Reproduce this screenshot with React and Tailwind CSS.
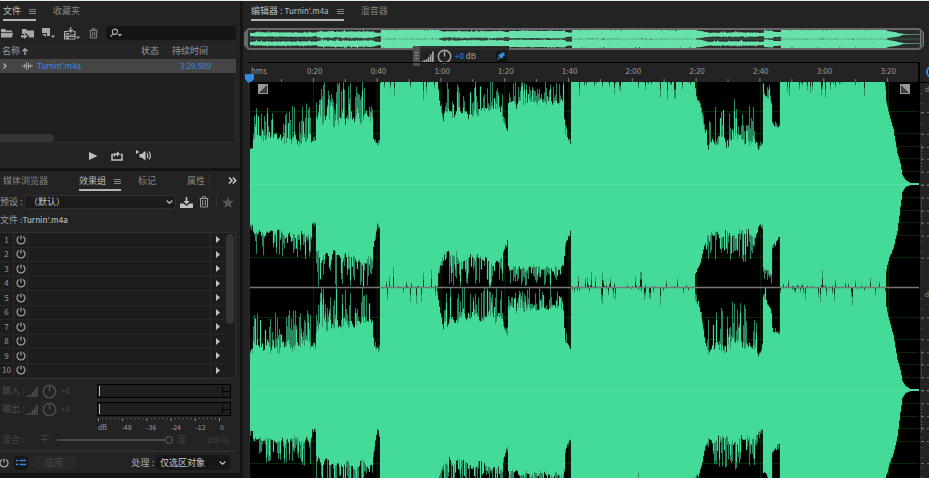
import React, { useState } from 'react';

// Envelope of one channel: [x, upper body, upper peak, lower body, lower peak]
const ENVELOPE = [
  [0, 34, 40, 40, 45], [3, 34, 42, 40, 48],
  [4, 34, 78, 44, 72], [62, 36, 86, 44, 76],
  [63, 42, 48, 38, 44], [67, 40, 48, 38, 42],
  [67, 54, 102, 64, 103], [123, 60, 102, 68, 103],
  [124, 42, 60, 60, 70], [128, 36, 44, 38, 42],
  [131, 40, 50, 42, 50], [131, 103, 103, 103, 103],
  [188, 103, 103, 103, 103], [189, 85, 100, 85, 100],
  [194, 55, 72, 70, 85], [196, 60, 103, 64, 103],
  [253, 66, 103, 72, 103], [254, 62, 75, 65, 75],
  [259, 46, 60, 52, 60], [259, 74, 103, 78, 103],
  [314, 78, 103, 80, 103], [316, 45, 60, 58, 65],
  [322, 38, 45, 42, 50], [322, 103, 103, 103, 103],
  [445, 103, 103, 103, 103], [446, 88, 98, 85, 98],
  [451, 76, 85, 78, 82], [456, 45, 58, 55, 65],
  [459, 32, 72, 42, 76], [485, 36, 94, 42, 80], [507, 34, 76, 42, 76],
  [509, 32, 40, 40, 50], [514, 40, 48, 38, 44],
  [514, 90, 103, 80, 100], [522, 75, 100, 88, 100],
  [523, 58, 66, 60, 66], [531, 54, 58, 50, 58],
  [531, 103, 103, 103, 103], [636, 103, 103, 103, 103],
  [637, 80, 84, 84, 88], [640, 68, 70, 72, 76],
  [644, 54, 56, 63, 65], [648, 30, 32, 46, 48],
  [651, 20, 21, 22, 24], [653, 9, 9, 8, 8],
  [656, 4, 4, 3, 3], [661, 1, 1, 1, 1], [670, 1, 1, 1, 1],
];

const TIMES = ['0:20', '0:40', '1:00', '1:20', '1:40', '2:00', '2:20', '2:40', '3:00', '3:20'];
const DB_LINES = [13, 26, 38, 51, 73];
const WIDTH = 670;

const noise = (n) => {
  const v = Math.sin(n * 127.1 + 311.7) * 43758.5453;
  return v - Math.floor(v);
};

const smooth = (x) => {
  const i = Math.floor(x);
  return noise(i) + (noise(i + 1) - noise(i)) * (x - i);
};

const envelopeAt = (x) => {
  let i = 0;
  while (i < ENVELOPE.length - 2 && ENVELOPE[i + 1][0] <= x) i++;
  const a = ENVELOPE[i];
  const b = ENVELOPE[i + 1];
  const t = b[0] === a[0] ? 0 : Math.min(1, (x - a[0]) / (b[0] - a[0]));
  return a.map((v, k) => v + (b[k] - v) * t);
};

const buildChannel = (center, seed) => {
  let body = '';
  let peaks = '';
  for (let x = 0; x < WIDTH; x++) {
    const [, ub, up, lb, lp] = envelopeAt(x);
    const full = ub >= 103;
    const side = (base, peak, s) => {
      const n = noise(x + s);
      const m = noise(x * 3 + s + 50);
      if (full) {
        const dip = n > 0.72 ? 1 + m * m * m * 20 : 0;
        return [103 - dip, 103 - dip * 0.5];
      }
      // slow swell of the loudness with single samples that stick out of it
      const swell = smooth(x / 3 + s);
      const spike = n > 0.84 ? 0.25 + m * 0.5 : n * 0.2;
      const solid = base + (peak - base) * (swell * 0.25 + spike);
      const tip = noise(Math.floor(x / 2) + s + 400) > 0.35 ? solid + (peak - solid) * m : solid;
      return [solid, tip];
    };
    const [u, ut] = side(ub, up, seed);
    const [l, lt] = side(lb, lp, seed + 900);
    body += `M${x + 0.5} ${(center - u).toFixed(1)}V${(center + l).toFixed(1)}`;
    peaks += `M${x + 0.5} ${(center - ut).toFixed(1)}V${(center + lt).toFixed(1)}`;
  }
  return { body, peaks };
};

const CHANNELS = [buildChannel(102, 0), buildChannel(308, 7)];

const Waveform = () => (
  <svg className="block h-full w-full" viewBox="0 0 670 396" preserveAspectRatio="none" aria-label="Waveform">
    <rect width="670" height="396" fill="#000" />
    {CHANNELS.map((c, i) => (
      <path key={i} d={c.peaks} stroke="#2a875f" strokeWidth="1.1" />
    ))}
    <g stroke="#0d8a0d" strokeOpacity="0.3">
      {[102, 308].map((c) =>
        DB_LINES.map((d) => <path key={c + d} d={`M0 ${c - d + 0.5}H670M0 ${c + d + 0.5}H670`} />)
      )}
      {TIMES.map((t, i) => (
        <path key={t} d={`M${(i + 1) * 63.9 + 0.5} 0V396`} />
      ))}
    </g>
    {CHANNELS.map((c, i) => (
      <path key={i} d={c.body} stroke="#44da98" strokeWidth="1.2" />
    ))}
    <path d="M0 102.5H670M0 308.5H670" stroke="#62df9f" strokeOpacity="0.7" />
    <path d="M0 205.5H670" stroke="#777" strokeWidth="1.4" />
    <path d="M0.5 0V396" stroke="#7a0505" />
  </svg>
);

const Overview = () => (
  <svg className="block h-full w-full" viewBox="0 0 670 412" preserveAspectRatio="none" aria-hidden="true">
    {CHANNELS.map((c, i) => (
      <path key={i} d={c.body} stroke="#68e2aa" strokeWidth="1.2" />
    ))}
    <path d="M0 102H670M0 308H670" stroke="#68e2aa" strokeWidth="14" />
    <path d="M0 205H670" stroke="#4d8f72" strokeWidth="14" />
  </svg>
);

const MenuLines = () => (
  <svg width="7" height="7" viewBox="0 0 7 7" stroke="#9a9a9a" aria-hidden="true">
    <path d="M0 1.5h7M0 3.5h7M0 5.5h7" strokeWidth="0.8" />
  </svg>
);

const Power = () => (
  <svg width="10" height="10" viewBox="0 0 10 10" fill="none" stroke="currentColor" strokeWidth="1.3" aria-hidden="true">
    <path d="M3 1.5A4 4 0 1 0 7 1.5M5 0.5V4.5" />
  </svg>
);

const Knob = () => (
  <svg width="15" height="15" viewBox="0 0 15 15" fill="none" stroke="currentColor" strokeWidth="1.5" aria-hidden="true">
    <circle cx="7.5" cy="7.5" r="6.2" />
    <path d="M7.5 1.5V7.5" />
  </svg>
);

const Bars = () => (
  <svg width="12" height="11" viewBox="0 0 12 11" fill="currentColor" aria-hidden="true">
    <path d="M0 9.5h1.5V11H0zM2 9h1.5v2H2zM4 8h1.5v3H4zM6 6h1.5v5H6zM8 3.5h1.5V11H8zM10 0.5h1.7V11H10z" />
  </svg>
);

const Trash = ({ size = 10 }) => (
  <svg width={size} height={size + 2} viewBox="0 0 10 12" fill="none" stroke="currentColor" aria-hidden="true">
    <path d="M0.5 2.5h9M3.3 2V0.7h3.4V2M1.5 3v8h7V3M3.7 4v5.5M6.3 4v5.5" />
  </svg>
);

const Caret = () => (
  <svg width="7" height="4" viewBox="0 0 7 4" fill="none" stroke="#bbb" strokeWidth="1.2" aria-hidden="true">
    <path d="M0.6 0.5 3.5 3.3 6.4 0.5" />
  </svg>
);

const Tab = ({ active, menu, children }) => (
  <button className={`flex h-full items-center gap-2 border-b-2 pt-[2px] ${active ? 'border-[#b4b4b4] text-[#bdbdbd]' : 'border-transparent text-[#858585]'}`}>
    <span>{children}</span>
    {menu && <MenuLines />}
  </button>
);

const FilesPanel = () => {
  const [query, setQuery] = useState('');

  return (
    <section className="bg-[#232323] pr-1">
      <div className="flex h-5 items-stretch gap-[17px] pl-[3px]">
        <Tab active menu>文件</Tab>
        <Tab>收藏夹</Tab>
      </div>

      {/* Toolbar */}
      <div className="flex h-[22px] items-center pt-[2px] text-[#a8a8a8]">
        <button aria-label="Open file" className="ml-[1px]">
          <svg width="12" height="10" viewBox="0 0 12 10" fill="currentColor">
            <path d="M0 1h4l1 1.4h6V4H0zM0 4.8h12L11 9.5H0z" />
          </svg>
        </button>
        <button aria-label="Import file" className="ml-2">
          <svg width="13" height="11" viewBox="0 0 13 11" fill="currentColor">
            <path d="M1 1h4l1 1.4h7V9.5H7.8L8.3 8.3 4 4.7V6H1z" />
            <path d="M0 7.2h3.2V5.6L6.6 8.3 3.2 11V9.4H0z" />
          </svg>
        </button>
        <button aria-label="New file" className="ml-2">
          <svg width="13" height="12" viewBox="0 0 13 12" fill="currentColor">
            <path d="M0 1h8v8H5V6H0z" /><path d="M0 7h4v3z" /><path d="M9 8.5h4l-2 2.5z" />
          </svg>
        </button>
        <button aria-label="Insert into multitrack" className="ml-[9px]">
          <svg width="16" height="13" viewBox="0 0 16 13" fill="none" stroke="currentColor">
            <path d="M4.5 4.5H0.5V8h10.500V4.500H9M0.500 9.500h10.500v2.500h-10.500zM2 6.500h3M2 10.800h3M0.500 8v2M11 8v2" strokeWidth="1.200" />
            <path d="M6.700 0V4.500M4.700 2.700l2 2.300 2-2.300" strokeWidth="1.300" />
            <path d="M12 9.500h4l-2 2.500z" fill="currentColor" stroke="none" />
          </svg>
        </button>
        <button aria-label="Delete" className="ml-[9px] text-[#8e8e8e]"><Trash size={9} /></button>
        <label className="ml-2 flex h-[14px] flex-1 items-center rounded-sm bg-[#151515] pl-1">
          <svg width="14" height="10" viewBox="0 0 14 10" fill="none" stroke="#b5b5b5" strokeWidth="1.2" aria-hidden="true">
            <circle cx="5.5" cy="3.6" r="2.9" /><path d="M3.6 5.6 0.6 9" />
            <path d="M8.5 6h5L11 9z" fill="#b5b5b5" stroke="none" />
          </svg>
          <input aria-label="Search" value={query} onChange={(e) => setQuery(e.target.value)} className="w-full min-w-0 bg-transparent px-1 outline-none" />
        </label>
      </div>

      <table className="w-full table-fixed border-collapse bg-[#202020] text-left">
        <colgroup>
          <col className="w-[36px]" />
          <col />
          <col className="w-[31px]" />
          <col className="w-[64px]" />
        </colgroup>
        <thead>
          <tr className="h-4 bg-[#252525] text-[#999]">
            <th colSpan={2} className="p-0 pl-[2px] font-normal">
              <span className="flex items-center gap-[2px]">
                名称
                <svg width="6" height="7" viewBox="0 0 6 7" fill="none" stroke="#aaa" strokeWidth="1.3"><path d="M3 7V1M0.5 3.3 3 0.8l2.5 2.5" /></svg>
              </span>
            </th>
            <th className="p-0 font-normal">状态</th>
            <th className="p-0 font-normal">持续时间</th>
          </tr>
        </thead>
        <tbody>
          <tr className="h-[14px] bg-[#454545] text-[8px] text-[#2f8be6]">
            <td className="p-0 pl-[3px]">
              <span className="flex items-center gap-[15px]">
                <svg width="4" height="6" viewBox="0 0 4 6" fill="none" stroke="#bbb" strokeWidth="1.2"><path d="M0.5 0.5 3 3 0.5 5.5" /></svg>
                <svg width="11" height="8" viewBox="0 0 11 8" stroke="#aaa"><path d="M0 4h11M2.5 2v4M4.5 0v8M6.5 1v6M8.5 2.5v3" strokeWidth="0.9" /></svg>
              </span>
            </td>
            <td className="p-0 pl-[1px]">Turnin'.m4a</td>
            <td className="p-0" />
            <td className="p-0 pl-2">3:29.509</td>
          </tr>
        </tbody>
      </table>

      <div className="h-[70px] border-r border-b border-[#2d2d2d] bg-[#1f1f1f] pt-[61px]">
        <div className="h-2 w-[54px] rounded-r-full bg-[#353535]" />
      </div>

      {/* Transport */}
      <div className="flex h-[25px] items-center justify-center gap-[13px] pl-1 text-[#c0c0c0]">
        <button aria-label="Play">
          <svg width="9" height="8" viewBox="0 0 9 8" fill="currentColor"><path d="M0 0 8.5 4 0 8z" /></svg>
        </button>
        <button aria-label="Loop playback">
          <svg width="12" height="10" viewBox="0 0 12 10" fill="none" stroke="currentColor" strokeWidth="1.5">
            <path d="M2.5 3.5H1V9h10V3.5H9.5M3.5 5.5V3H7" /><path d="M6 0.3 9 3 6 5.7z" fill="currentColor" stroke="none" />
          </svg>
        </button>
        <button aria-label="Auto-play">
          <svg width="16" height="11" viewBox="0 0 16 11" fill="currentColor">
            <path d="M0 0 3.5 2 0 4z" /><path d="M3.5 4h2.2L9.5 0.8v9.6L5.7 7.5H3.5z" />
            <path d="M11 3q1.5 2.5 0 5M13 1.5q2.8 4 0 8" fill="none" stroke="currentColor" strokeWidth="1.2" />
          </svg>
        </button>
      </div>
    </section>
  );
};

const Level = ({ label }) => (
  <div className="flex h-[18px] items-center text-[#4c4c4c]">
    <span className="w-6 whitespace-nowrap">{label} :</span>
    <Bars />
    <span className="mx-1"><Knob /></span>
    <span className="w-9 text-[8px]">+0</span>
    <div className="flex h-[14px] flex-1 border border-black bg-[#1e1e1e] py-px">
      <div className="ml-px w-px shrink-0 bg-[#d6cc10]" />
      <div className="flex-1" />
      <div className="flex w-2 flex-col border-l border-black">
        <div className="flex-1 border-b border-black" />
        <div className="flex-1" />
      </div>
    </div>
  </div>
);

const EffectsPanel = () => {
  const [mix, setMix] = useState(100);

  return (
    <section className="flex min-h-0 flex-1 flex-col bg-[#232323]">
      <div className="flex h-5 shrink-0 items-stretch pl-[3px]">
        <Tab>媒体浏览器</Tab>
        <div className="ml-[31px]"><Tab active menu>效果组</Tab></div>
        <div className="ml-[17px]"><Tab>标记</Tab></div>
        <div className="ml-[31px]"><Tab>属性</Tab></div>
        <button aria-label="More tabs" className="mt-[3px] mb-1 ml-1 flex flex-1 items-center justify-end border-l border-[#333] pr-[3px]">
          <svg width="9" height="7" viewBox="0 0 9 7" fill="none" stroke="#ccc" strokeWidth="1.5"><path d="M1 0.5 4 3.5 1 6.5M4.8 0.5 7.8 3.5 4.8 6.5" /></svg>
        </button>
      </div>

      <div className="flex h-[22px] shrink-0 items-center text-[#999]">
        <label htmlFor="preset" className="w-6 shrink-0 whitespace-nowrap">预设 :</label>
        <div className="relative flex-1">
          <select id="preset" className="block h-[14px] w-full appearance-none rounded-sm border border-[#303030] bg-[#1b1b1b] pl-1 text-[#c8c8c8]">
            <option>（默认）</option>
          </select>
          <span className="pointer-events-none absolute top-[5px] right-[3px]"><Caret /></span>
        </div>
        <button aria-label="Save preset" className="ml-1 text-[#c0c0c0]">
          <svg width="13" height="11" viewBox="0 0 13 11" fill="currentColor">
            <path d="M0 6.5h3.5L6.5 9l3-2.5H13V11H0z" /><path d="M5.7 0h1.6v4H9.5L6.5 7.5 3.5 4h2.2z" />
          </svg>
        </button>
        <button aria-label="Delete preset" className="ml-[6px] text-[#999]"><Trash /></button>
        <button aria-label="Favorite" className="ml-[7px] border-l border-[#303030] py-px pr-[6px] pl-[5px]">
          <svg width="12" height="11" viewBox="0 0 12 11" fill="#555"><path d="M6 0 7.6 3.8 12 4.1 8.6 6.8 9.7 11 6 8.7 2.3 11 3.4 6.8 0 4.1 4.4 3.8z" /></svg>
        </button>
      </div>

      <p className="mb-[5px] h-[14px] shrink-0 leading-[14px] text-[#999]">文件 <span className="text-[8px] font-medium text-[#b0b0b0]">:Turnin'.m4a</span></p>

      {/* Effect slots */}
      <div className="mr-1 flex min-h-0 flex-1 border border-l-0 border-[#303030] bg-[#1d1d1d]">
        <ol className="flex flex-1 flex-col">
          {Array.from({ length: 10 }, (_, i) => (
            <li key={i} className="flex min-h-0 flex-1 items-center border-b border-[#272727] text-[#999]">
              <span className="w-[13px] text-center text-[8px]">{i + 1}</span>
              <button aria-label={`Slot ${i + 1} power`} className="flex h-full w-[15px] items-center justify-center border-x border-[#292929]"><Power /></button>
              <span className="flex-1" />
              <button aria-label={`Slot ${i + 1} menu`} className="flex h-full w-[15px] items-center justify-center border-l border-[#292929] text-[#c0c0c0]">
                <svg width="4" height="7" viewBox="0 0 4 7" fill="currentColor"><path d="M0 0 4 3.5 0 7z" /></svg>
              </button>
            </li>
          ))}
        </ol>
        <div className="w-[10px] p-px"><div className="h-[63%] w-2 rounded-full bg-[#353535]" /></div>
      </div>

      {/* Levels */}
      <div className="shrink-0 pt-[3px] pr-[9px] pl-[2px]">
        <Level label="输入" />
        <Level label="输出" />
      </div>
      <div className="shrink-0 pr-3 pl-[98px]">
        <svg className="block h-[3px] w-full pr-2" viewBox="0 0 124 3" preserveAspectRatio="none" aria-hidden="true">
          {Array.from({ length: 31 }, (_, i) => (
            <path key={i} d={`M${i * 4.1 + 0.5} 0V${i % 6 ? 1 : 3}`} stroke="#888" />
          ))}
        </svg>
        <div className="flex h-3 items-center justify-between pr-1 text-[7px] text-[#9a9a9a]">
          {['dB', '-48', '-36', '-24', '-12', '0'].map((v) => <span key={v}>{v}</span>)}
        </div>
      </div>
      <div className="mr-1 flex h-[19px] shrink-0 items-center border-b-2 border-[#2e2e2e] pb-1 pl-[2px] text-[#454545]">
        <label htmlFor="mix" className="w-[38px]">混合 :</label>
        <span className="mr-2">干</span>
        <input
          id="mix"
          type="range"
          value={mix}
          onChange={(e) => setMix(Number(e.target.value))}
          className="h-[9px] min-w-0 flex-1 appearance-none bg-[linear-gradient(#484848,#484848)] bg-size-[calc(100%-8px)_2px] bg-left bg-no-repeat [&::-webkit-slider-thumb]:h-2 [&::-webkit-slider-thumb]:w-2 [&::-webkit-slider-thumb]:appearance-none [&::-webkit-slider-thumb]:rounded-full [&::-webkit-slider-thumb]:border-[1px] [&::-webkit-slider-thumb]:border-[#606060] [&::-webkit-slider-thumb]:bg-[#232323]"
        />
        <span className="ml-1">湿</span>
        <span className="w-[50px] pr-[7px] text-right text-[8px]">{mix} %</span>
      </div>
      <div className="flex h-[21px] shrink-0 items-center text-[#a5a5a5]">
        <button aria-label="Toggle rack power" className="-ml-px mr-[5px]"><Power /></button>
        <button aria-label="Show list" className="flex h-[14px] w-[14px] items-center justify-center rounded-sm bg-[#171717]">
          <svg width="10" height="7" viewBox="0 0 10 7" stroke="#2f8be6" strokeWidth="1.5" aria-hidden="true"><path d="M0 1.5h2M3.5 1.5H10M0 5.5h2M3.5 5.5H10" /></svg>
        </button>
        <button disabled className="ml-[3px] h-[14px] w-[46px] rounded-full bg-[#292929] leading-[14px] text-[#484848]">应用</button>
        <label htmlFor="process" className="mr-[2px] ml-auto">处理 :</label>
        <div className="relative mr-[10px]">
          <select id="process" className="block h-[15px] w-[74px] appearance-none rounded-sm bg-[#171717] pl-1 text-[#c8c8c8]">
            <option>仅选区对象</option>
          </select>
          <span className="pointer-events-none absolute top-[6px] right-1"><Caret /></span>
        </div>
      </div>
    </section>
  );
};

const Hud = () => (
  <div className="absolute top-[18px] left-[167px] flex h-5 items-center bg-[#232323]/90 pr-[2px] text-[#a5a5a5]">
    <div className="flex h-full w-[7px] items-center justify-center bg-[#505050]">
      <svg width="3" height="10" viewBox="0 0 3 10" stroke="#888"><path d="M0 1.5h3M0 4.5h3M0 7.5h3" /></svg>
    </div>
    <span className="mr-[3px] ml-[2px]"><Bars /></span>
    <Knob />
    <span className="mr-5 ml-[3px] text-[8px] whitespace-nowrap"><span className="text-[#2f8be6]">+0</span> dB</span>
    <button aria-label="Pin" className="flex h-[11px] w-[11px] items-center justify-center bg-[#151515]">
      <svg width="8" height="8" viewBox="0 0 8 8" fill="#2f8be6"><path d="M4.3 0.5H7.5V3.7L6.5 4 4.8 7 3.6 5.5 0.5 8 0 7.5 2.5 4.4 1 3.2 4 1.5z" /></svg>
    </button>
  </div>
);

const Fade = ({ flip }) => (
  <svg width="10" height="10" viewBox="0 0 10 10" aria-hidden="true">
    <rect width="10" height="10" fill="#999" />
    <path d={flip ? 'M1 1V9H9z' : 'M9 1V9H1z'} fill="#3c3c3c" />
  </svg>
);

const LevelRuler = () => (
  <svg className="block h-full w-full" viewBox="0 0 9 396" preserveAspectRatio="none" aria-hidden="true">
    {[102, 308].map((c) => (
      <g key={c} stroke="#777">
        {[0, ...DB_LINES].map((d) => (
          <path key={d} d={`M1 ${c - d + 0.5}h3m3 0h2M1 ${c + d + 0.5}h3m3 0h2`} />
        ))}
        <path d={`M1.5 ${c - 40}V${c - 12}M1.5 ${c + 13}V${c + 42}`} strokeDasharray="1 2" />
        <path d={`M1.5 ${c - 92}V${c - 45}M1.5 ${c + 47}V${c + 94}`} strokeDasharray="1 9" />
      </g>
    ))}
  </svg>
);

const Editor = () => (
  <main className="flex min-w-0 flex-1 flex-col bg-[#232323]">
    <div className="flex h-5 shrink-0 items-stretch gap-[17px] pl-2">
      <Tab active menu>编辑器 : <span className="text-[8px]">Turnin'.m4a</span></Tab>
      <Tab>混音器</Tab>
    </div>

    {/* Overview strip with the level HUD over it */}
    <div className="relative mt-[7px] mr-[7px] ml-[3px] h-[22px] shrink-0">
      <div className="flex h-full items-center rounded border-2 border-[#686868] bg-[#2b2b2b]">
        <div className="-ml-1 h-4 w-1 shrink-0 rounded bg-[#686868]" />
        <div className="h-full min-w-0 flex-1 pl-[2px]"><Overview /></div>
        <div className="-mr-1 h-4 w-1 shrink-0 rounded border border-[#777] bg-[#4b4b4b]" />
      </div>
      <Hud />
    </div>

    <div className="mt-3 flex min-h-0 flex-1 pl-[6px]">
      <div className="flex min-w-0 flex-1 flex-col">
        <div className="relative h-5 shrink-0 border-t border-r border-black">
          <div className="-mr-[2px] flex h-[15px] items-center text-[8px] text-[#999]">
            <span className="min-w-0 flex-[0.5] pl-[2px]">hms</span>
            {TIMES.map((t) => <span key={t} className="min-w-0 flex-1 text-center">{t}</span>)}
          </div>
          <svg className="block h-1 w-full" viewBox="0 0 670 4" preserveAspectRatio="none" aria-hidden="true">
            {TIMES.map((t, i) => (
              <g key={t} stroke="#777">
                <path d={`M${(i + 1) * 63.9 + 0.5} 0V4`} />
                <path d={`M${(i + 0.5) * 63.9 + 0.5} 1V4`} />
              </g>
            ))}
          </svg>
          <svg className="absolute -bottom-px -left-1" width="9" height="10" viewBox="0 0 9 10" aria-hidden="true">
            <path d="M0 1h9V6L5.5 10h-2L0 6z" fill="#2f8be6" />
          </svg>
        </div>
        <div className="relative min-h-0 flex-1">
          <Waveform />
          <button aria-label="Fade in" className="absolute top-[2px] left-[9px]"><Fade /></button>
          <button aria-label="Fade out" className="absolute top-[2px] right-[9px]"><Fade flip /></button>
        </div>
      </div>
      <div className="flex w-[10px] shrink-0 flex-col overflow-hidden border-l border-black">
        <div className="flex h-5 shrink-0 items-center pl-[6px]">
          <span className="h-3 w-3 shrink-0 rounded-full border-2 border-[#2f8be6] bg-[#151515]" />
        </div>
        <div className="relative min-h-0 flex-1 border-t border-black">
          <LevelRuler />
          <span className="absolute top-0 right-0 text-[7px] text-[#8a8a8a]">d</span>
          <span className="absolute top-[52%] right-0 text-[7px] text-[#8a8a8a]">d</span>
        </div>
      </div>
    </div>
  </main>
);

export default function App() {
  return (
    <div className="flex h-screen gap-[3px] overflow-hidden border-t border-[#e4eeea] bg-[#151515] font-['Noto_Sans_CJK_SC',sans-serif] text-[9px] leading-3">
      <aside className="flex w-60 shrink-0 flex-col gap-[3px] pb-[5px]">
        <FilesPanel />
        <EffectsPanel />
      </aside>
      <Editor />
    </div>
  );
}
